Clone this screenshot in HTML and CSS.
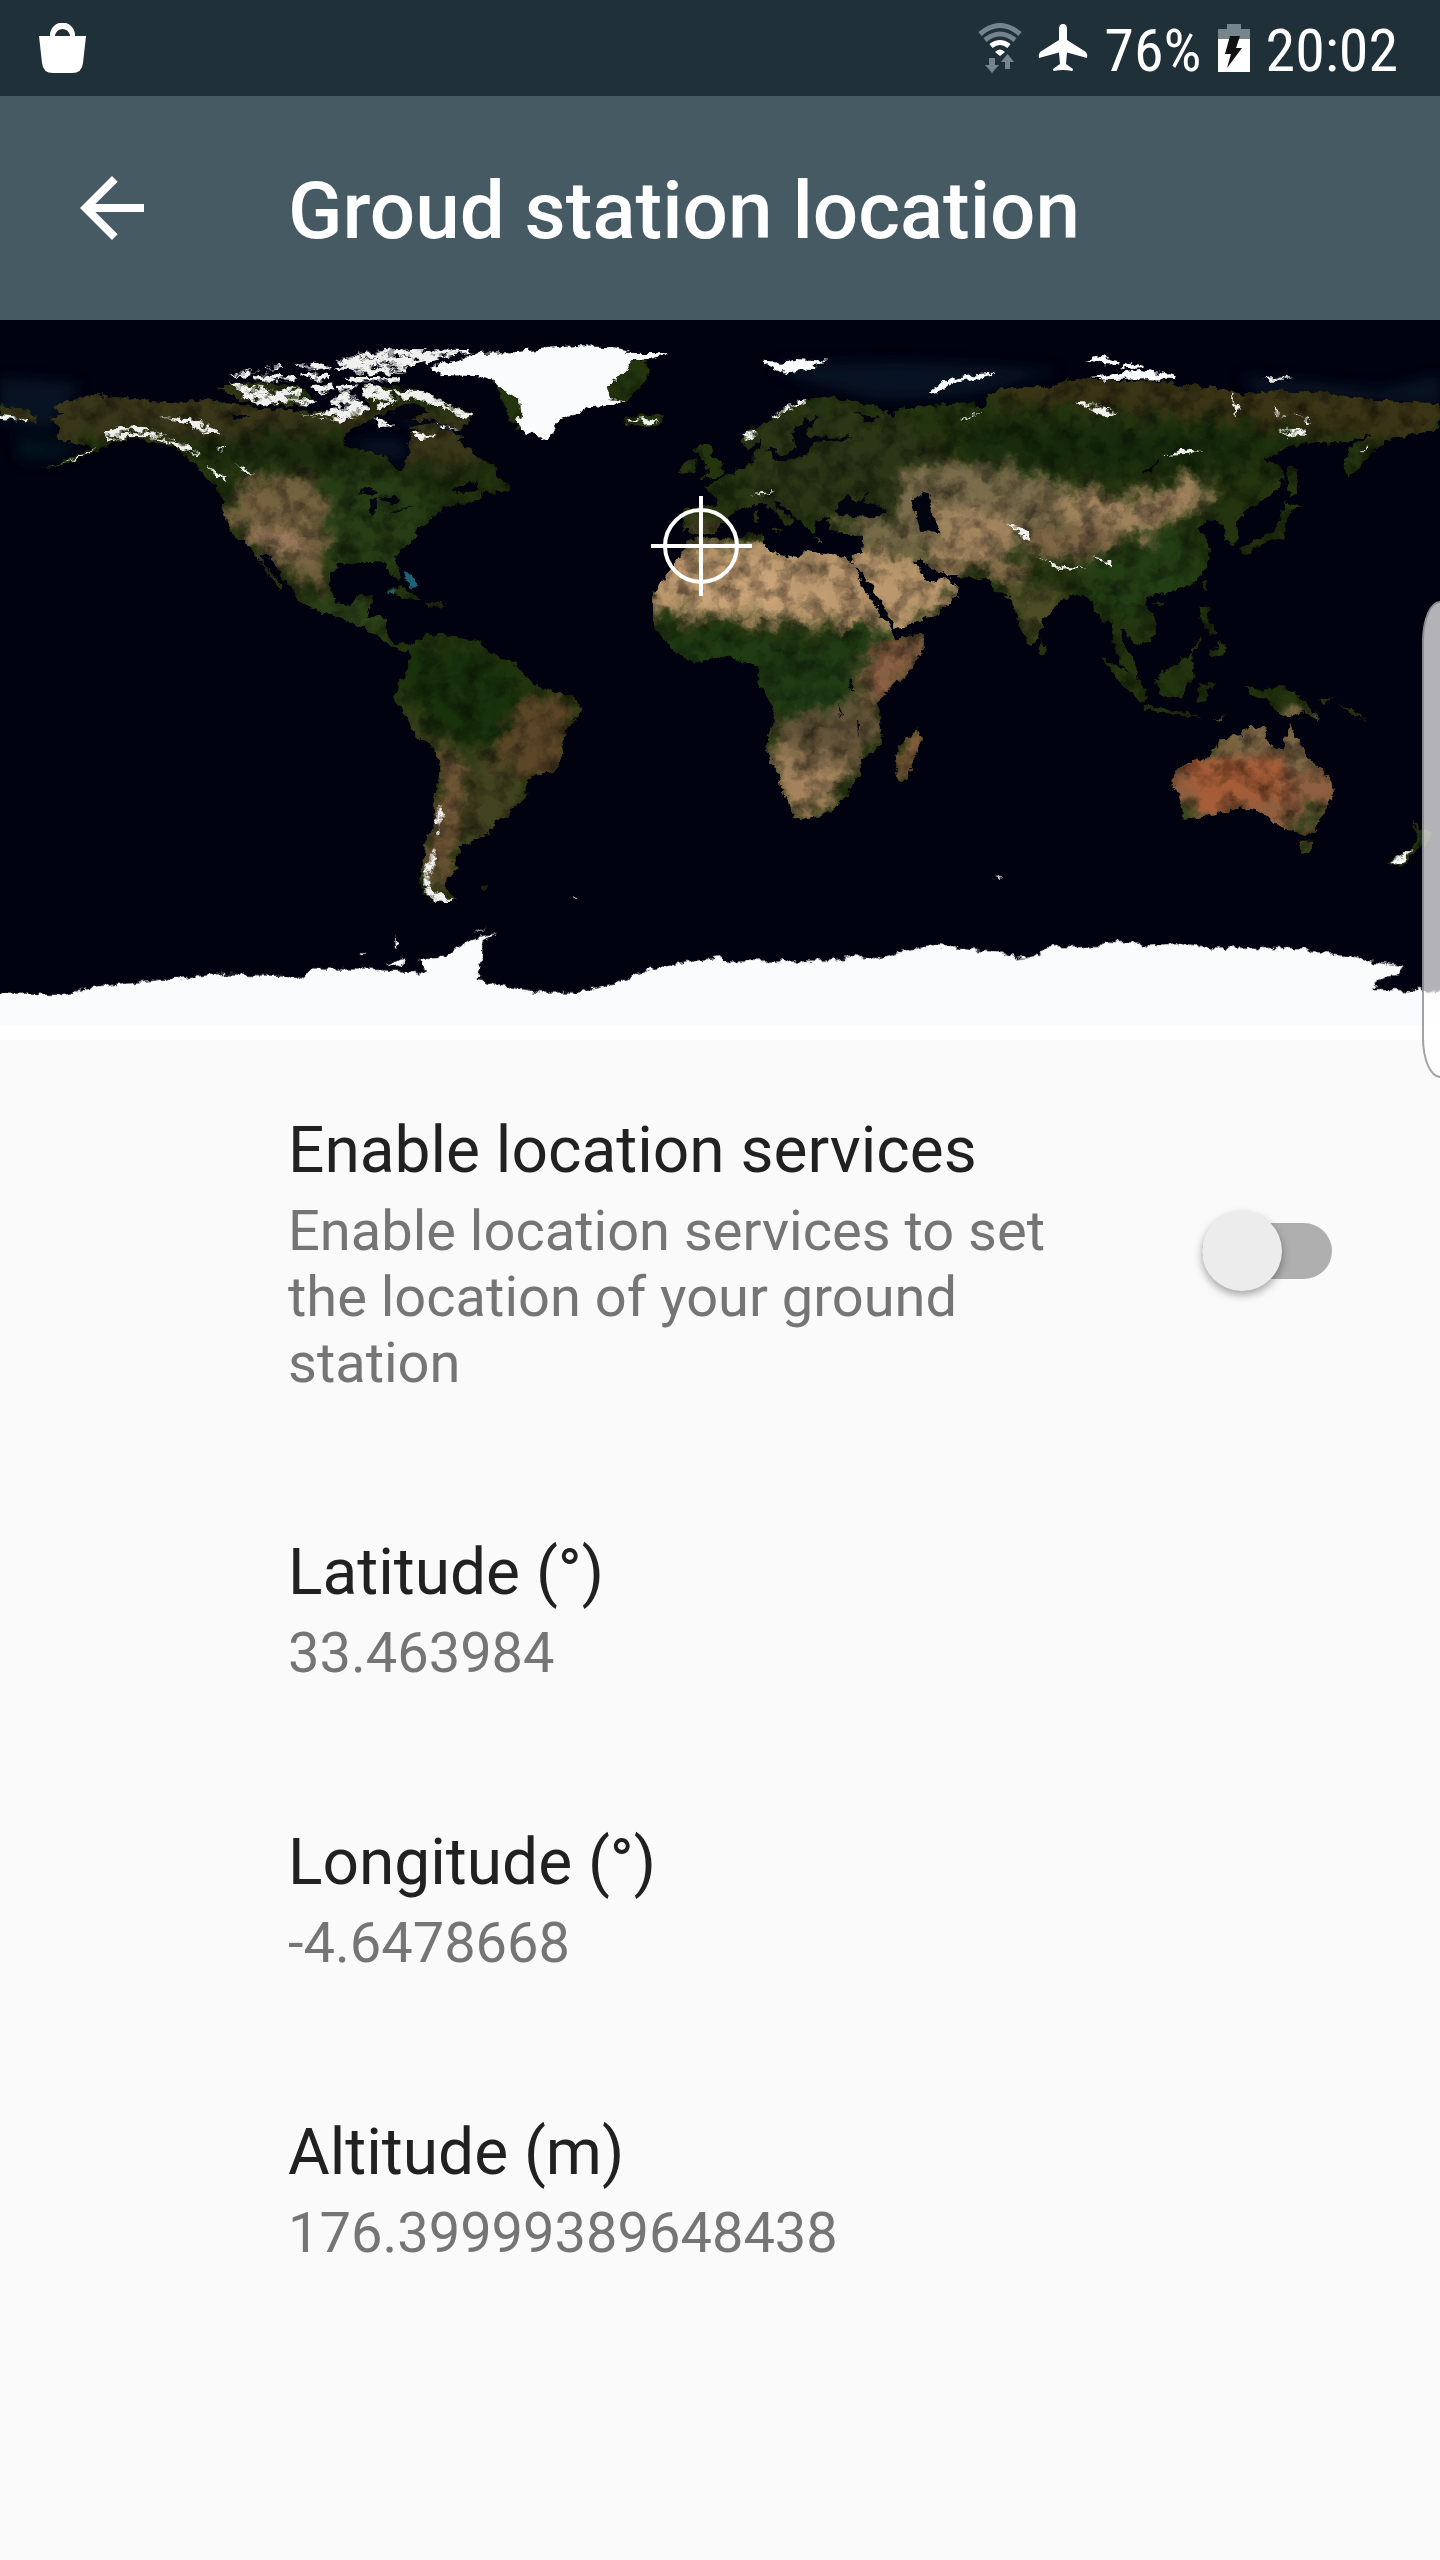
FILE: index.html
```html
<!DOCTYPE html>
<html lang="en">
<head>
<meta charset="utf-8">
<meta name="viewport" content="width=device-width, initial-scale=1">
<title>Groud station location</title>
<link rel="stylesheet" href="styles.css">
</head>
<body>
<div class="status-bar">
  <svg class="icon-bag" viewBox="0 0 48 50" aria-hidden="true"><path fill="#fff" fill-rule="evenodd" d="M0 13H11V12A12.500 12.500 0 0 1 36 12V13H47L44 40Q43 50 33 50H14Q4 50 3 40ZM16 13H31V12Q29 6 23.500 6T16 12Z"/></svg>
  <div class="status-items">
    <svg class="icon-wifi" viewBox="0 0 44 50" aria-hidden="true">
      <g fill="none" stroke-width="5"><path stroke="#76858c" d="M2 11Q22 -6 42 11M7 17Q22 5 37 17"/><path stroke="#fff" d="M13 23Q22 16 31 23"/></g>
      <path fill="#fff" d="M17 29Q22 24 27 29L22 33Z"/>
      <path fill="#76858c" d="M11 35H17V42H21L14 50L7 42H11ZM27 46V39H23L29.500 31L36 39H32V46Z"/>
    </svg>
    <svg class="icon-plane" viewBox="0 0 50 48" aria-hidden="true"><path fill="#fff" d="M21 5Q21 0 25 0T29 5V16L48 28Q50 31 49 34L29 28.500L28 40L35 45Q35 47 34 47Q25 45 16 47Q15 47 15 45L22 40L21 28.500L1 34Q0 31 2 28L21 16Z"/></svg>
    <span class="battery-text">76%</span>
    <svg class="icon-battery" viewBox="0 0 32 48" aria-hidden="true"><path fill="#76858c" d="M9 0H23V5H32V16H0V5H9Z"/><path fill="#fff" d="M0 15H32V48H0Z"/><path fill="#111" d="M12 12H22L18 24H24L9 44L13 30H7Z"/></svg>
    <time class="clock">20:02</time>
  </div>
</div>

<header class="app-bar">
  <button class="back" type="button" aria-label="Navigate up"><svg viewBox="0 0 24 24" aria-hidden="true"><path fill="#fff" d="M20 11H7.830l5.590-5.590L12 4l-8 8 8 8 1.410-1.410L7.830 13H20z"/></svg></button>
  <h1>Groud station location</h1>
</header>

<main>
<svg class="map" viewBox="0 0 1440 720" role="img" aria-label="World map with the ground station marked">
  <defs>
    <filter id="coast" x="0" y="0" width="1440" height="720" filterUnits="userSpaceOnUse" color-interpolation-filters="sRGB">
      <feTurbulence type="fractalNoise" baseFrequency=".13" numOctaves="3" seed="4" result="n"/>
      <feDisplacementMap in="SourceGraphic" in2="n" scale="9" xChannelSelector="R" yChannelSelector="G"/>
      <feGaussianBlur stdDeviation=".5"/>
    </filter>
    <filter id="soft" x="0" y="0" width="1440" height="720" filterUnits="userSpaceOnUse" color-interpolation-filters="sRGB">
      <feTurbulence type="fractalNoise" baseFrequency=".05" numOctaves="4" seed="9" result="n"/>
      <feGaussianBlur in="SourceGraphic" stdDeviation="7" result="b"/>
      <feDisplacementMap in="b" in2="n" scale="34" xChannelSelector="R" yChannelSelector="G"/>
    </filter>
    <filter id="relief" x="0" y="0" width="1440" height="720" filterUnits="userSpaceOnUse" color-interpolation-filters="sRGB">
      <feTurbulence type="fractalNoise" baseFrequency=".05" numOctaves="6" seed="2"/>
      <feColorMatrix values="0 0 0 0 0  0 0 0 0 0  0 0 0 0 0  2 0 0 0 -.8"/>
    </filter>
    <filter id="patchy" x="0" y="0" width="1440" height="720" filterUnits="userSpaceOnUse" color-interpolation-filters="sRGB">
      <feTurbulence type="fractalNoise" baseFrequency=".08 .2" numOctaves="4" seed="7"/>
      <feColorMatrix values="0 0 0 0 1  0 0 0 0 1  0 0 0 0 1  5 0 0 0 -1.500" result="m"/>
      <feComposite in="SourceGraphic" in2="m" operator="in"/>
    </filter>
    <filter id="haze" x="0" y="0" width="1440" height="720" filterUnits="userSpaceOnUse"><feGaussianBlur stdDeviation="7"/></filter>
    <clipPath id="land">
      <path transform="scale(.33333)" d="M150 295L190 285 160 262 200 240 290 226 380 235 470 245 530 248 630 235 680 250 760 262 860 270 930 275 1010 270 1090 270 1140 250 1180 255 1115 300 1090 310 1040 335 1030 365 1060 385 1110 395 1160 412 1185 445 1210 450 1212 420 1240 400 1225 370 1230 335 1290 335 1340 350 1390 370 1430 410 1445 415V480L1390 490 1350 510 1390 520 1445 515V535L1400 550 1330 565 1300 590 1250 625 1250 655 1200 690 1185 715 1200 760 1190 790 1170 760 1155 725 1090 722 1010 735 990 760 992 810 1010 850 1050 858 1075 825 1120 825 1110 865 1100 890 1165 895 1160 940 1180 970 1225 975 1240 990 1195 992 1150 960 1120 935 1050 905 1000 890 930 865 895 840 880 810 840 765 800 700 780 700 790 730 850 800 840 808 800 755 770 715 740 670 700 650 675 600 665 520 640 490 600 450 560 410 520 380 450 362 390 355 330 370 290 395 200 430 140 445 200 418 280 385 215 370 170 350 180 320ZM-10 255L60 262 110 285 100 305 60 300-10 295ZM1150 808L1200 802 1265 838 1220 836ZM1275 848L1330 843 1340 858 1290 864ZM1230 980L1260 955 1300 940 1340 945 1380 955 1445 965V1085H1200L1225 1040 1230 1010ZM655 205L740 188 900 195 950 240 900 258 760 250ZM1090 195L1250 208 1340 245 1420 285 1385 330 1300 300 1230 300 1180 270 1120 290ZM1230 320L1300 310 1390 350 1350 370Z"/>
      <path transform="translate(480)scale(.33333)" d="M-5 415L40 430 55 470 90 500 85 520-5 515ZM430 290L490 283 555 290 540 312 490 322 440 312ZM370 140L500 120 500 180 470 215 440 245 370 245ZM40 180L130 230 125 330 90 300ZM612 575L620 560 700 560 712 550 700 520 668 500 730 475 780 445 820 435 822 400 845 385 840 365 800 385 785 360 800 335 870 300 900 270 960 245 1050 230 1110 240 1190 262 1215 275 1240 290 1260 260 1300 270 1340 255 1445 250V770L1400 765 1350 745 1320 715 1305 725 1320 755 1350 790 1400 770 1435 805 1430 830 1380 880 1300 910 1245 930 1235 905 1210 860 1180 810 1150 760 1120 735 1115 715 1145 700 1150 650 1080 640 1050 630 1040 600 1060 590 1010 600 1000 640 975 620 950 590 920 570 890 545 875 540 900 570 950 600 920 620 900 590 870 560 840 545 800 560 760 575 740 600 720 620 700 640 660 645 610 630ZM870 625L905 628 890 640ZM825 570L837 590 832 612 822 610ZM665 375L690 375 700 410 740 450 735 465 665 478 690 450 660 410 640 395ZM605 430L650 418 645 455 600 462ZM650 655L720 660 845 635 855 685 900 705 955 715 970 690 1050 705 1100 712 1120 735 1150 800 1200 880 1240 940 1250 955 1335 938 1330 985 1290 1050 1265 1085H840L835 1035 780 1025 760 1005 700 1015 640 1028 590 1000 545 950 518 905 520 820 560 760 600 710 625 665ZM-5 970L40 1005 100 1030 130 1060 145 1085H-5ZM1000 658L1035 660 1020 665Z"/>
      <path transform="translate(960)scale(.33333)" d="M-5 245L80 260 80 230 120 205 270 200 340 178 450 182 630 185 640 195 780 205 850 225 950 210 1100 220 1200 235 1300 245 1450 250V325L1380 335 1310 355 1270 370 1235 400 1210 430 1165 470 1150 430 1170 380 1240 340 1140 370 1060 365 980 380 915 420 960 440 975 470 950 510 900 550 850 575 830 610 835 640 825 670 795 665 800 635 780 605 740 600 715 625 730 640 750 690 740 740 700 790 620 820 560 830 555 855 590 900 590 940 540 980 510 950 480 925 490 970 525 1030 535 1075 520 1070 480 1030 460 970 455 910 415 890 400 850 370 825 320 830 270 875 245 900 235 960 210 980 180 920 155 840 110 810 80 775-5 775ZM985 435L1002 440 1012 520 988 530ZM975 550L1025 560 990 575 982 600 970 655 930 660 850 705 840 685 900 655 945 630 962 590ZM725 790L742 780 735 812ZM580 850L612 845 600 862ZM240 960L262 990 250 1008 238 995ZM722 860L748 860 745 910 775 940 755 945 722 905ZM770 965L798 975 792 1010 750 1000 775 985ZM690 990L725 945 730 950 695 1000ZM425 1015L480 1040 545 1085H480ZM590 1085L600 1060 640 1040 690 1000 705 1030 695 1085Z"/>
      <path transform="translate(0 360)scale(.45918 .33333)" d="M870-3L860 60 885 110 905 165 945 205 958 250 955 300 945 370 950 420 930 470 925 530 915 590 920 640 960 668 995 660 970 625 972 600 995 570 985 545 1005 520 1000 495 1030 490 1040 470 1070 460 1075 425 1100 410 1145 350 1150 300 1180 280 1210 275 1225 220 1230 150 1262 110 1265 70 1250 50 1220 37 1190 30 1150-3ZM1040 618L1065 616 1060 628 1045 630Z"/>
      <path transform="translate(720 360)scale(.45918 .33333)" d="M80-3L100 40 120 110 105 160 103 220 130 290 140 350 160 410 180 418 240 400 275 350 290 310 308 290 305 240 355 190 352 130 342 70 390-3ZM430 148L438 180 405 300 385 305 380 270 390 200ZM990 265L1060 235 1090 180 1110 170 1135 165 1150 140 1190 145 1185 180 1225 210 1240 130 1265 190 1275 230 1330 290 1335 340 1310 420 1290 460 1270 465 1215 440 1195 410 1170 390 1130 382 1080 405 1010 420 1005 370 988 310ZM1262 485L1292 485 1285 520 1268 518ZM1140 10L1180 35 1200 22 1230 22 1270 55 1310 125 1270 95 1230 110 1200 70 1160 45ZM920 75L990 90 1050 110 990 104 925 88ZM870-3H905L930 30 925 68 890 40ZM945-3H1025L1005 55 965 50ZM1045 10L1082 15 1060 30 1062 60 1040 65ZM1075 122L1105 98 1090 120ZM1508 415L1525 450 1555 455 1530 500 1480 560 1453 550 1500 510 1522 480ZM1300 65L1330 55 1320 75ZM1345 65L1370 85 1410 125 1380 105Z"/>
    </clipPath>
  </defs>

  <rect width="1440" height="720" fill="#01020f"/>
  <!-- shallow seas -->
  <g filter="url(#haze)" fill="#082435" opacity=".55">
    <path d="M0 58L80 64 50 110 0 100ZM770 45L900 42 1060 50 970 75 880 80 800 60ZM1240 55L1380 70 1440 55V85L1260 75ZM350 120L400 120 410 140 370 135ZM395 85L425 80 430 105 400 100Z"/>
    <path fill="#04202a" d="M15 115L80 125 60 140 20 140Z"/>
  </g>

  <g filter="url(#coast)">
    <g clip-path="url(#land)">
      <rect width="1440" height="720" fill="#23340f"/>
      <g filter="url(#soft)">
        <!-- tundra -->
        <path fill="#39361a" d="M0 65H220L300 85 400 85 480 100V150L380 135 340 110 260 115 200 125 120 110 40 135 0 110Z"/>
        <path fill="#3b3416" d="M1000 50L1200 55 1440 70V125L1330 115 1240 100 1150 95 1060 85 1000 85Z"/>
        <path fill="#1c2c0d" d="M200 115L340 120 380 140 480 150V180L350 165 240 145 200 140Z"/>
        <path fill="#2b3616" d="M740 85L900 90 960 150 880 200 740 190Z"/>
        <path fill="#182c0c" d="M960 105L1250 110 1290 130 1200 150 1120 150 1040 150 960 130Z"/>
        <!-- prairie and western ranges -->
        <path fill="#263d15" d="M320 150L420 160 440 190 400 250 330 240Z"/>
        <path fill="#75623f" d="M235 165L265 150 310 155 330 185 325 240 330 275 300 265 275 230 255 225 225 200Z"/>
        <path fill="#98785a" d="M245 205L300 205 305 235 270 245Z"/>
        <path fill="#2d431a" d="M350 275L400 290 390 320 340 300 300 285Z"/>
        <!-- amazon, andes, plateau -->
        <path fill="#18320c" d="M410 325L470 325 520 360 510 410 470 430 425 400 405 365Z"/>
        <path fill="#5c4627" d="M520 380L575 375 575 410 560 455 520 460 490 435Z"/>
        <path fill="#725738" d="M395 375L430 420 460 435 465 480 450 560 435 580 428 530 440 450Z"/>
        <path fill="#434320" d="M475 430L530 455 520 490 490 520 460 540 465 470Z"/>
        <!-- sahara and arabia -->
        <path fill="#ba976d" d="M640 225L870 225 960 255 960 275 895 315 870 300 830 306 770 300 650 294Z"/>
        <path fill="#caa478" d="M680 265L760 240 800 270 840 280 770 290 700 285Z"/>
        <path fill="#203c14" d="M650 310L770 318 840 318 885 305 890 330 870 390 810 400 760 380 700 350 650 335Z"/>
        <path fill="#8b6044" d="M880 325L930 310 920 340 895 370 860 390 855 350Z"/>
        <path fill="#65553a" d="M780 395L880 385 880 420 855 460 770 450Z"/>
        <path fill="#a5845d" d="M765 420L800 440 850 440 830 490 790 500Z"/>
        <path fill="#85603d" d="M895 410H930L915 465H895Z"/>
        <path fill="#534c2c" d="M690 195L725 200 715 220 680 215Z"/>
        <!-- central asia -->
        <path fill="#7b6d4b" d="M900 150L960 145 1050 155 1080 175 1030 220 960 245 900 230 840 210 830 200 900 195Z"/>
        <path fill="#a3855f" d="M930 185L1010 190 1000 250 940 252Z"/>
        <path fill="#a0835d" d="M1030 195L1080 170 1130 180 1190 155 1215 175 1180 195 1150 220 1080 205Z"/>
        <path fill="#806747" d="M1020 210L1100 205 1120 225 1080 240 1030 235Z"/>
        <path fill="#8e754e" d="M985 235L1030 245 1020 265 990 265Z"/>
        <path fill="#4d4c26" d="M1010 265L1070 270 1050 310 1030 325Z"/>
        <path fill="#233e14" d="M1080 245L1180 210 1210 240 1170 290 1100 300Z"/>
        <!-- australia -->
        <path fill="#8f5e3f" d="M1165 430L1345 430 1345 520 1290 530 1165 500Z"/>
        <path fill="#a65d37" d="M1180 445L1280 435 1285 480 1200 488Z"/>
        <path fill="#7a6544" d="M1210 395L1320 395 1335 450 1300 460 1280 430 1220 435Z"/>
        <path fill="#38491f" d="M1328 480L1338 490 1310 520 1285 505ZM1165 490L1200 488 1205 505 1170 510Z"/>
      </g>
      <rect width="1440" height="720" filter="url(#relief)" opacity=".55"/>
    </g>

    <!-- inland seas, gulfs and lakes -->
    <g fill="#02050f">
      <path transform="translate(480)scale(.33333)" d="M970 300L1020 293 985 320 978 348 1080 350 1110 345 1105 358 1000 365 990 395 920 425 890 430 870 395 850 390 880 385 920 410 945 380 935 340ZM1060 570L1100 525 1130 545 1165 522 1150 545 1210 560 1220 582 1150 590 1080 585ZM1290 540L1330 520 1360 535 1350 560 1365 600 1385 640 1320 635 1310 590ZM1120 275L1170 290 1200 288 1165 305Z"/>
      <path transform="scale(.33333)" d="M1070 515L1110 500 1140 515 1110 522ZM1110 580L1115 540 1135 530 1125 580ZM1145 530L1190 530 1195 545 1165 560ZM1170 580L1210 565 1245 555 1200 575ZM680 285L750 285 720 300ZM1180 265L1240 245 1285 275 1240 300 1200 300Z"/>
      <path transform="translate(960)scale(.33333)" d="M545 455L585 435 600 410 600 430 570 458Z"/>
      <path d="M849 360L854 363 852 372 847 368ZM838 382L842 395 840 396ZM857 400L860 405 858 416Z"/>
    </g>
    <path fill="#1e6277" d="M403 253L411 252 419 267 410 268ZM385 271L397 270 395 274Z"/>

    <!-- broken arctic and mountain snow -->
    <g fill="#f0f0ee" filter="url(#patchy)">
      <path transform="scale(.33333)" d="M690 165L740 150 775 155 740 170ZM760 175L800 160 890 172 890 182 830 190 770 185ZM790 142L840 135 850 146 810 152ZM680 190L780 200 830 215 880 195 905 200 910 225 950 240 930 255 860 245 800 258 750 245 720 215ZM1000 125L1050 105 1100 95 1200 86 1400 90 1425 97 1340 112 1300 125 1230 140 1210 165 1150 160 1090 165 1050 150 1000 150 1030 140ZM890 130L950 128 1000 143 960 152 900 145ZM895 165L940 155 990 165 990 180 940 182ZM1030 170L1200 172 1200 189 1060 187ZM930 200L1000 190 1000 215 960 224ZM1010 195L1070 190 1050 220 1090 245 1105 270 1080 290 1020 305 910 287 980 275 1010 260 985 245 1020 225ZM1090 197L1140 192 1150 215 1250 212 1330 240 1390 275 1420 283 1400 297 1340 270 1260 240 1200 232 1170 255 1130 270 1140 240 1090 232ZM1125 292L1190 315 1140 322ZM1300 305L1380 330 1340 325ZM1230 335L1310 350 1260 358ZM310 340L370 318 440 322 500 350 560 372 605 405 590 412 520 378 450 352 380 350 320 365ZM480 292L600 300 660 338 610 340 560 310ZM620 435L685 475 680 484 630 455ZM710 435L775 468 760 474ZM640 375L675 385 665 395ZM140 440L250 405 300 380 250 412ZM0 288L90 298 80 304 0 296Z"/>
      <path transform="translate(480)scale(.33333)" d="M870 295L910 262 980 240 940 268 900 288ZM790 340L830 328 835 345 800 365ZM440 302L490 292 540 305 490 312ZM810 525L880 515 840 530Z"/>
      <path transform="translate(960)scale(.33333)" d="M910 175L960 168 1000 178 930 183ZM345 245L400 248 480 280 440 290 400 275ZM815 220L835 255 825 290ZM940 260L980 290 950 288ZM960 330L1030 325 1040 345 980 350ZM600 405L690 385 730 395 680 402ZM1000 275L1060 310 1050 312ZM1200 400L1225 368 1222 380ZM140 610L180 615 220 660 180 650ZM220 705L300 740 390 745 300 750ZM400 712L455 725 450 738ZM0 300L70 275 10 303Z"/>
      <path transform="translate(0 360)scale(.45918 .33333)" d="M955 375L965 400 953 470 948 455ZM945 500L950 530 935 590 940 630 985 662 950 665 925 635 922 590 935 540Z"/>
    </g>

    <!-- solid ice -->
    <g fill="#fafbfc">
      <path transform="translate(480)scale(.33333)" d="M-150 145L-50 115 0 98 100 97 200 88 280 78 400 82 450 92 430 98 565 100 520 115 450 125 440 150 410 180 380 200 390 235 435 240 400 255 330 262 290 285 240 295 225 325 205 360 180 350 130 335 105 300 125 290 120 240 70 210 40 180 0 169-110 165ZM850 125L910 128 960 118 1045 122 1000 135 1010 148 960 145 920 163 880 145ZM1350 215L1400 180 1445 170 1445 178 1400 200 1370 225Z"/>
      <path transform="translate(960)scale(.33333)" d="M0 172L50 162 100 158 95 165 30 180 0 185ZM380 120L420 108 480 125 475 135 430 132ZM480 140L520 128 550 140 500 148ZM395 175L480 160 540 150 640 165 648 180 560 178 450 180Z"/>
      <path transform="translate(0 360)scale(.45918 .33333)" d="M-20 940L140 942 190 925 250 915 350 900 480 882 610 888 650 895 680 868 800 868 930 878 915 840 970 830 1000 800 1030 775 1080 760 1050 785 1050 830 1040 900 1100 920 1180 937 1260 937 1340 910 1400 875 1480 850 1572 830V1100H-20ZM1030 760L1065 742 1040 758ZM1240 650L1258 655 1255 660ZM840 850L880 835 875 860ZM860 770L868 800 862 802ZM785 818L797 816 790 825Z"/>
      <path transform="translate(720 360)scale(.45918 .33333)" d="M-3 842L110 842 240 842 290 828 345 835 400 812 470 795 500 800 610 818 645 835 690 825 715 798 830 798 840 785 910 788 930 800 1000 792 1050 802 1270 805 1300 820 1380 830 1420 845 1488 862 1480 880 1430 900 1425 930 1530 930 1600 938V1100H-3ZM600 587L614 590 608 598ZM1460 548L1510 505 1490 540 1470 556Z"/>
    </g>
  </g>
  <rect y="705" width="1440" height="15" fill="#fefefe"/>

  <!-- ground station marker -->
  <g fill="none" stroke="#fff" stroke-width="4"><circle cx="701" cy="226" r="36"/><path d="M701 176V276M651 226H752"/></g>
</svg>

<label class="preference">
  <span class="text">
    <span class="title">Enable location services</span>
    <span class="summary">Enable location services to set the location of your ground station</span>
  </span>
  <input class="switch" type="checkbox" role="switch">
</label>
<button class="preference" type="button">
  <span class="text"><span class="title">Latitude (°)</span><span class="summary">33.463984</span></span>
</button>
<button class="preference" type="button">
  <span class="text"><span class="title">Longitude (°)</span><span class="summary">-4.6478668</span></span>
</button>
<button class="preference" type="button">
  <span class="text"><span class="title">Altitude (m)</span><span class="summary">176.39999389648438</span></span>
</button>
</main>
<div class="edge-handle"></div>
</body>
</html>
```
FILE: styles.css
```css
* {
  box-sizing: border-box;
}

body {
  position: relative;
  min-height: 100vh;
  margin: 0;
  background: #fafafa;
  color: #212121;
  font-family: Roboto, sans-serif;
  overflow-x: hidden;
}

svg {
  display: block;
  flex: none;
}

.status-bar {
  display: flex;
  align-items: center;
  justify-content: space-between;
  height: 96px;
  padding: 0 42px 0 39px;
  background: #1f3039;
  color: #fff;
}

.status-items {
  display: flex;
  align-items: center;
  gap: 16px;
}

.icon-bag {
  width: 48px;
  height: 50px;
}

.icon-wifi {
  width: 44px;
  height: 50px;
}

.icon-plane {
  width: 50px;
  height: 48px;
}

.icon-battery {
  width: 32px;
  height: 48px;
}

.battery-text,
.clock {
  padding-top: 6px;
  font-family: "Roboto Condensed", Roboto, sans-serif;
  font-size: 60px;
  line-height: 72px;
}

.app-bar {
  display: flex;
  align-items: center;
  height: 224px;
  padding: 0 64px;
  background: #465a64;
  color: #fff;
}

.back {
  width: 96px;
  height: 96px;
  margin-right: 128px;
  padding: 0;
  border: 0;
  background: none;
}

.app-bar h1 {
  margin: 0;
  padding-top: 6px;
  font-size: 80px;
  font-weight: 500;
  line-height: 96px;
}

.map {
  width: 100%;
}

.preference {
  display: flex;
  align-items: center;
  gap: 98px;
  width: 100%;
  padding: 72px 108px 66px 288px;
  border: 0;
  background: none;
  color: inherit;
  font-family: inherit;
  text-align: left;
}

.text {
  display: flex;
  flex: 1;
  flex-direction: column;
  gap: 8px;
}

.title {
  font-size: 64px;
  line-height: 78px;
}

.summary {
  color: #757575;
  font-size: 56px;
  line-height: 66px;
}

.switch {
  position: relative;
  flex: none;
  width: 130px;
  height: 56px;
  margin: 0 0 6px;
  border-radius: 28px;
  background: #afafaf;
  appearance: none;
}

.switch::before {
  content: "";
  position: absolute;
  top: -12px;
  left: 0;
  width: 80px;
  height: 80px;
  border-radius: 50%;
  background: #ececec;
  box-shadow: 0 4px 8px rgba(0, 0, 0, .35);
}

.switch:checked::before {
  left: 50px;
}

.edge-handle {
  position: absolute;
  top: 601px;
  right: 0;
  width: 18px;
  height: 477px;
  border: 2px solid rgba(120, 124, 128, .7);
  border-right: 0;
  border-radius: 18px 0 0 18px / 40px 0 0 40px;
  background: rgba(255, 255, 255, .7);
}
```
